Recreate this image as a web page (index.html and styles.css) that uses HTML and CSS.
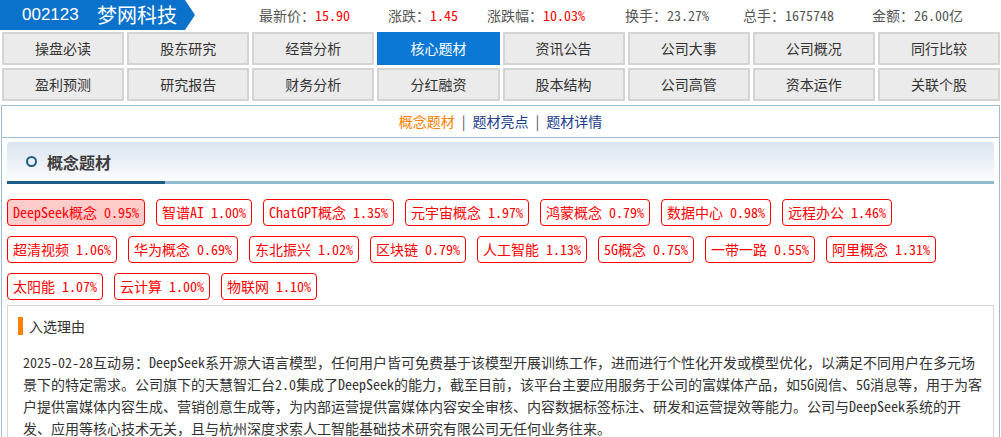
FILE: index.html
```html
<!DOCTYPE html>
<html lang="zh-CN">
<head>
    <meta charset="UTF-8">
    <title>梦网科技 - 核心题材</title>
    <link rel="stylesheet" href="styles.css">
</head>
<body>
    <!-- stock name + quote line -->
    <div class="topbar">
        <div class="stock">
            <span class="code">002123</span>
            <span class="name">梦网科技</span>
        </div>
        <ul class="quote">
            <li>最新价：<em>15.90</em></li>
            <li>涨跌：<em>1.45</em></li>
            <li>涨跌幅：<em>10.03%</em></li>
            <li>换手：<span>23.27%</span></li>
            <li>总手：<span>1675748</span></li>
            <li>金额：<span>26.00亿</span></li>
        </ul>
    </div>

    <!-- F10 menu -->
    <div class="tabs">
        <a class="tab">操盘必读</a>
        <a class="tab">股东研究</a>
        <a class="tab">经营分析</a>
        <a class="tab active">核心题材</a>
        <a class="tab">资讯公告</a>
        <a class="tab">公司大事</a>
        <a class="tab">公司概况</a>
        <a class="tab">同行比较</a>
        <a class="tab">盈利预测</a>
        <a class="tab">研究报告</a>
        <a class="tab">财务分析</a>
        <a class="tab">分红融资</a>
        <a class="tab">股本结构</a>
        <a class="tab">公司高管</a>
        <a class="tab">资本运作</a>
        <a class="tab">关联个股</a>
    </div>

    <div class="panel">
        <div class="subnav">
            <a class="current">概念题材</a><span class="sep">|</span><a>题材亮点</a><span class="sep">|</span><a>题材详情</a>
        </div>

        <div class="section">
            <div class="section-title"><i class="dot"></i>概念题材</div>
            <div class="title-line"></div>

            <div class="tags">
                <span class="tag hot">DeepSeek概念 0.95%</span>
                <span class="tag">智谱AI 1.00%</span>
                <span class="tag">ChatGPT概念 1.35%</span>
                <span class="tag">元宇宙概念 1.97%</span>
                <span class="tag">鸿蒙概念 0.79%</span>
                <span class="tag">数据中心 0.98%</span>
                <span class="tag">远程办公 1.46%</span>
                <span class="tag">超清视频 1.06%</span>
                <span class="tag">华为概念 0.69%</span>
                <span class="tag">东北振兴 1.02%</span>
                <span class="tag">区块链 0.79%</span>
                <span class="tag">人工智能 1.13%</span>
                <span class="tag">5G概念 0.75%</span>
                <span class="tag">一带一路 0.55%</span>
                <span class="tag">阿里概念 1.31%</span>
                <span class="tag">太阳能 1.07%</span>
                <span class="tag">云计算 1.00%</span>
                <span class="tag">物联网 1.10%</span>
            </div>

            <div class="reason">
                <h3>入选理由</h3>
                <p><span class="en">2025-02-28</span>互动易：<span class="en">DeepSeek</span>系开源大语言模型，任何用户皆可免费基于该模型开展训练工作，进而进行个性化开发或模型优化，以满足不同用户在多元场景下的特定需求。公司旗下的天慧智汇台<span class="en">2.0</span>集成了<span class="en">DeepSeek</span>的能力，截至目前，该平台主要应用服务于公司的富媒体产品，如<span class="en">5G</span>阅信、<span class="en">5G</span>消息等，用于为客户提供富媒体内容生成、营销创意生成等，为内部运营提供富媒体内容安全审核、内容数据标签标注、研发和运营提效等能力。公司与<span class="en">DeepSeek</span>系统的开发、应用等核心技术无关，且与杭州深度求索人工智能基础技术研究有限公司无任何业务往来。</p>
            </div>
        </div>
    </div>
</body>
</html>
```

FILE: styles.css
```css
body {
    margin: 0;
    background: #fff;
    color: #333;
    font-family: "Noto Sans CJK SC", "Liberation Sans", sans-serif;
    font-size: 14px;
}
ul {
    margin: 0;
    padding: 0;
    list-style: none;
}
/* half-width latin and digits, like the old song-style system font */
.en,
.tag,
.quote em,
.quote span {
    font-feature-settings: "hwid";
}
/* Stock name with arrow tip + quote numbers */
.topbar {
    display: flex;
    align-items: center;
    height: 30px;
}
.stock {
    display: flex;
    align-items: center;
    width: 195px;
    height: 30px;
    background: #0a72ca;
    color: #fff;
    clip-path: polygon(0 0, 185px 0, 195px 50%, 185px 100%, 0 100%);
}
.code {
    width: 75px;
    margin-left: 22px;
    font-family: "Liberation Sans", sans-serif;
    font-size: 17px;
}
.name {
    font-size: 20px;
    line-height: 30px;
}
.quote {
    display: grid;
    grid-template-columns: 129px 99px 138px 118px 129px auto;
    margin-left: 64px;
    color: #555;
    line-height: 30px;
}
.quote em {
    font-style: normal;
    color: #f00;
}
/* Menu grid */
.tabs {
    display: grid;
    grid-template-columns: repeat(8, 1fr);
    gap: 3px;
    padding: 2px 1px 0 2px;
}
.tab {
    border: 2px solid #d4d4d4;
    background: #ebebeb;
    color: #333;
    text-align: center;
    line-height: 29px;
    cursor: pointer;
}
.tab.active {
    background: #0a78d4;
    border-color: #0a78d4;
    color: #fff;
}
/* Main panel */
.panel {
    margin: 4px 1px 0 1px;
    border: 1px solid #9dbdd5;
    border-bottom: none;
}
.subnav {
    text-align: center;
    line-height: 31px;
    border-bottom: 1px solid #9dbdd5;
}
.subnav a {
    color: #1a3e8c;
    cursor: pointer;
}
.subnav a.current {
    color: #ff8000;
}
.subnav .sep {
    margin: 0 7px;
    color: #555;
}
.section {
    padding: 4px 5px 0;
}
.section-title {
    display: flex;
    align-items: center;
    height: 39px;
    padding-left: 19px;
    border-radius: 4px 4px 0 0;
    background: linear-gradient(to bottom, #dae4ef, #fbfcfe);
    color: #3c3c3c;
    font-size: 16px;
    font-weight: bold;
}
.dot {
    width: 7px;
    height: 7px;
    margin-right: 10px;
    border: 2px solid #1c5e8a;
    border-radius: 50%;
}
.title-line {
    height: 3px;
    background: linear-gradient(to right, #1d5c87 158px, #92b9d2 158px);
}
/* Concept tags */
.tags {
    display: flex;
    flex-wrap: wrap;
    gap: 10px 11px;
    margin: 15px 0 5px;
}
.tag {
    padding: 0 5px;
    border: 1px solid #f00;
    border-radius: 4px;
    color: #f00;
    line-height: 25px;
}
.tag.hot {
    background: #ffcccc;
}
/* Reason box */
.reason {
    border: 1px solid #d6d6d6;
    border-bottom: none;
    padding: 11px 7px 10px 10px;
}
.reason h3 {
    margin: 0;
    padding-left: 6px;
    border-left: 5px solid #ff8000;
    font-size: 14px;
    font-weight: normal;
    line-height: 18px;
}
.reason p {
    margin: 16px 0 0 5px;
    line-height: 22px;
}
```
